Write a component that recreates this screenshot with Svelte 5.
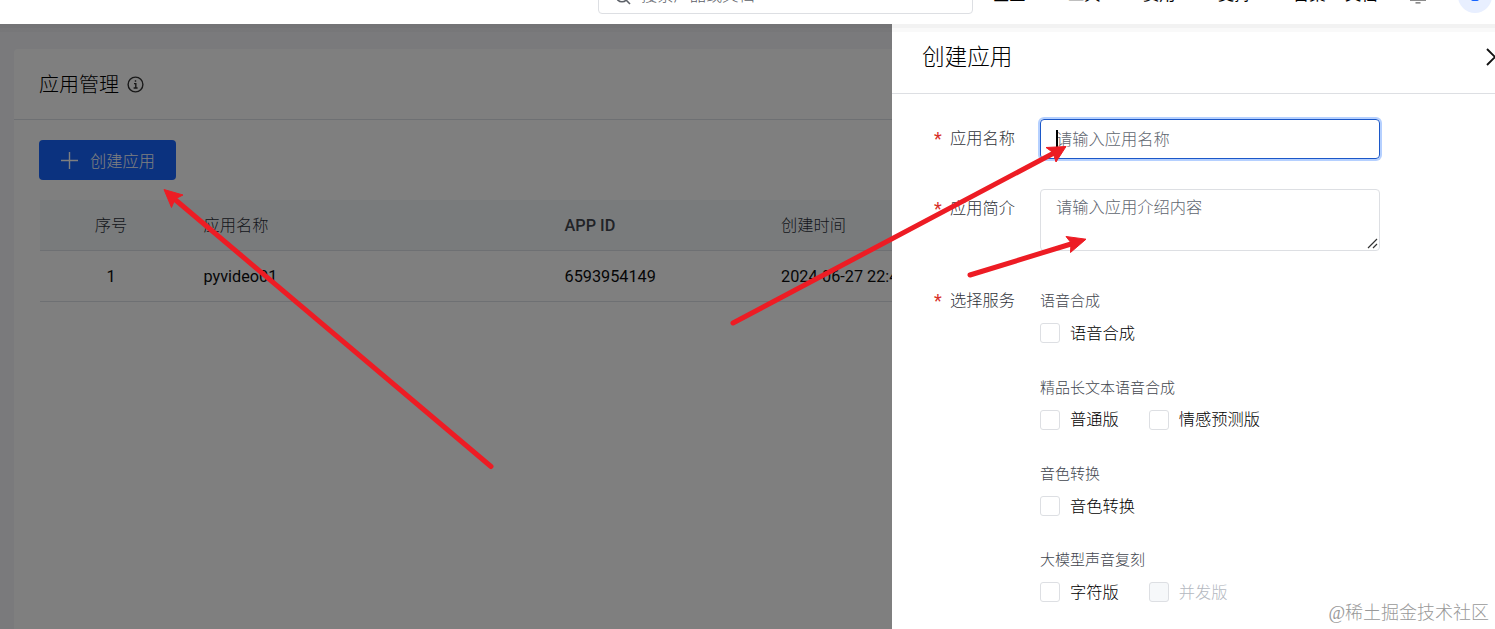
<script>
  const nav = [
    { label: '企业', width: 75 },
    { label: '工具', width: 75 },
    { label: '费用', width: 75 },
    { label: '支持', width: 75 },
    { label: '备案', width: 52 },
    { label: '文档', width: 67 }
  ];
  const groups = [
    { title: '语音合成', options: [{ label: '语音合成' }] },
    { title: '精品长文本语音合成', options: [{ label: '普通版' }, { label: '情感预测版' }] },
    { title: '音色转换', options: [{ label: '音色转换' }] },
    { title: '大模型声音复刻', options: [{ label: '字符版' }, { label: '并发版', disabled: true }] }
  ];
</script>

<div class="screen">
  <header>
    <div class="search">
      <svg width="16" height="16" viewBox="0 0 16 16"><circle cx="7" cy="7" r="5.8" /><path d="M11 11l4 4" /></svg>
      <span>搜索产品或文档</span>
    </div>
    <nav>
      {#each nav as item}
        <span style="width:{item.width}px">{item.label}</span>
      {/each}
    </nav>
    <svg class="bell" width="18" height="20" viewBox="0 0 18 20"><path d="M3 16V9a6 6 0 0 1 12 0v7M1 16.2h16M6.5 18.8h5" /></svg>
    <div class="avatar"><i></i></div>
  </header>

  <main>
    <section class="card">
      <div class="card-head">
        <h1>应用管理</h1>
        <svg width="17" height="17" viewBox="0 0 17 17"><circle cx="8.5" cy="8.5" r="7.4" /><path d="M7 7.6h1.8v4.2M6.6 12h4M8.5 4.3v1.5" /></svg>
      </div>
      <div class="card-body">
        <button class="create">
          <svg width="17" height="17" viewBox="0 0 17 17"><path d="M8.5 0v17M0 8.5h17" /></svg>
          <span>创建应用</span>
        </button>
        <div class="table">
          <div class="row head">
            <span class="c">序号</span><span>应用名称</span><span class="latin">APP ID</span><span>创建时间</span>
          </div>
          <div class="row">
            <span class="c">1</span><span>pyvideo01</span><span>6593954149</span><span>2024-06-27 22:42:18</span>
          </div>
        </div>
      </div>
    </section>
    <div class="mask"></div>
    <aside>
      <div class="drawer-head">
        <h2>创建应用</h2>
        <svg width="18" height="18" viewBox="0 0 18 18"><path d="M1 1l16 16M17 1L1 17" /></svg>
      </div>
      <form>
        <div class="field name">
          <div class="label"><b>*</b>应用名称</div>
          <div class="input focus"><i class="caret"></i>请输入应用名称</div>
        </div>
        <div class="field intro">
          <div class="label"><b>*</b>应用简介</div>
          <div class="input area">
            请输入应用介绍内容
            <svg width="11" height="11" viewBox="0 0 11 11"><path d="M1 10L10 1M6 10l4-4" /></svg>
          </div>
        </div>
        <div class="field">
          <div class="label"><b>*</b>选择服务</div>
          <div class="groups">
            {#each groups as g}
              <div class="group">
                <div class="group-title">{g.title}</div>
                <div class="options">
                  {#each g.options as o}
                    <div class="option" class:disabled={o.disabled}><i></i><span>{o.label}</span></div>
                  {/each}
                </div>
              </div>
            {/each}
          </div>
        </div>
      </form>
    </aside>
    <div class="top-shadow"></div>
  </main>

  <svg class="arrows" width="1495" height="629" viewBox="0 0 1495 629">
    <path class="line" d="M491 466.500L175 199.500M733 323L1053 153.500M970 275L1071 244" />
    <path class="tip" d="M164 189.500l19 5.500-8 4-3.500 8.500zM1066 146.500l-20 1 7 5 3 9.500zM1086 239.200l-20-2.700 5 6.300-.5 9.700z" />
  </svg>
  <div class="watermark">@稀土掘金技术社区</div>
</div>

<style>
  :global(body) { overflow: hidden; }
  .screen {
    position: relative; width: 1495px; height: 629px; overflow: hidden;
    display: flex; flex-direction: column;
    font: 300 16.25px/24px Roboto, "Noto Sans CJK SC", sans-serif; color: #000; background: #fff;
  }
  h1, h2 { margin: 0; font-weight: 300; }
  svg { fill: none; stroke: currentColor; flex: none; }
  header { height: 24px; flex: none; display: flex; align-items: flex-end; padding-left: 598px; box-sizing: border-box; }
  .search {
    width: 375px; height: 38px; box-sizing: border-box; margin-bottom: 10px; flex: none;
    border: 1px solid #dddfe3; border-radius: 4px; padding: 3px 0 0 16px;
    display: flex; align-items: center; gap: 10px; color: #5d6168;
  }
  .search svg { stroke-width: 1.6; }
  .search span { padding-bottom: 2px; }
  nav { display: flex; margin: 0 0 17px 20px; font-weight: 400; }
  .bell { margin: 0 0 20px -3px; stroke-width: 1.3; color: #666; }
  .avatar {
    width: 34px; height: 34px; margin: 0 0 11px 31px; flex: none; border-radius: 50%; background: #e8efff;
    display: flex; justify-content: center; align-items: center;
  }
  .avatar i { width: 8px; height: 10px; border-radius: 2px; background: #1664ff; }

  main { position: relative; flex: 1; min-height: 0; background: #f4f5f8; padding: 25px 0 0 14px; overflow: hidden; box-sizing: border-box; }
  .card { height: 600px; background: #fff; border-radius: 4px 0 0 0; }
  .card-head { height: 71px; box-sizing: border-box; border-bottom: 1px solid #dde0e6; display: flex; align-items: center; gap: 8px; padding-left: 25px; }
  h1 { font-size: 20px; line-height: 30px; padding-top: 1px; }
  .card-head svg { stroke-width: 1.4; color: #333; }
  .card-body { padding: 20px 25px; }
  .create {
    display: flex; align-items: center; gap: 12px; height: 40px; width: 137px; padding: 0 0 0 22px;
    border: 0; border-radius: 4px; background: #1664ff; color: #fff; font: inherit;
  }
  .create svg { stroke-width: 1.4; }
  .create span { padding-top: 3px; white-space: nowrap; }
  .table { margin: 20px 0 0 1px; width: 1440px; }
  .row { display: grid; grid-template-columns: 163.500px 361px 216.500px 1fr; height: 50px; align-items: center; border-bottom: 1px solid #dde0e6; font-weight: 400; color: #0c0d0e; }
  .row span { padding-top: 2px; }
  .row .c { width: 142px; text-align: center; }
  .head { background: #f3f7f9; color: #42464e; font-weight: 300; }
  .head span { color: #2c3038; }
  .head .latin { font-weight: 500; color: #42464e; }
  .mask { position: absolute; inset: 0; background: rgba(0, 0, 0, 0.5); }
  .top-shadow { position: absolute; left: 0; right: 0; top: 0; height: 8px; background: linear-gradient(rgba(0,0,0,.05) 0 50%, rgba(0,0,0,.022) 50%); }

  aside { position: absolute; left: 892px; top: 0; width: 620px; bottom: 0; background: #fff; }
  .drawer-head { height: 70px; box-sizing: border-box; border-bottom: 1px solid #dddfe3; display: flex; align-items: center; padding: 0 0 4px 30px; }
  h2 { font-size: 22.6px; line-height: 32px; width: 564px; padding-top: 2px; }
  .drawer-head svg { stroke-width: 1.9; color: #111; }
  form { padding: 25px 0 0 42px; }
  .field { display: flex; }
  .label { width: 106px; flex: none; display: flex; color: #2f333a; line-height: 40px; }
  .label b { width: 16px; color: #d7312a; font-weight: 400; font-size: 18px; }
  .name { height: 70px; }
  .intro { height: 92px; }
  .input { position: relative; width: 340px; height: 40px; box-sizing: border-box; border: 1px solid #dddfe3; border-radius: 4px; padding: 0 15px; line-height: 40px; color: #60666f; }
  .focus { border-color: #1c58c8; box-shadow: 0 0 0 2px #b5d0ff; }
  .caret { position: absolute; left: 15px; top: 10px; width: 2px; height: 19px; background: #000; }
  .area { height: 62px; line-height: 36px; }
  .area svg { position: absolute; right: 1px; bottom: 1px; color: #333; stroke-width: 1.2; }
  .groups { padding-top: 0.200px; }
  .group { height: 86.400px; }
  .group-title { font-size: 15px; line-height: 40px; height: 33px; color: #42464e; }
  .options { display: flex; gap: 30px; }
  .option { display: flex; align-items: center; gap: 10px; height: 38px; }
  .option span { padding-top: 1.400px; }
  .option i { width: 20px; height: 20px; box-sizing: border-box; border: 1px solid #dddfe3; border-radius: 3px; }
  .disabled { color: #b4b8bf; }
  .disabled i { background: #f6f8fa; }

  .arrows { position: absolute; left: 0; top: 0; }
  .line { stroke: #ed1c24; stroke-width: 5; stroke-linecap: round; }
  .tip { fill: #ed1c24; stroke: #ed1c24; stroke-width: 1; }
  .watermark { position: absolute; right: 6px; bottom: 3px; font-size: 18px; line-height: 26px; font-weight: 300; color: #999; font-family: "Liberation Serif", "Noto Sans CJK SC", serif; }
</style>
